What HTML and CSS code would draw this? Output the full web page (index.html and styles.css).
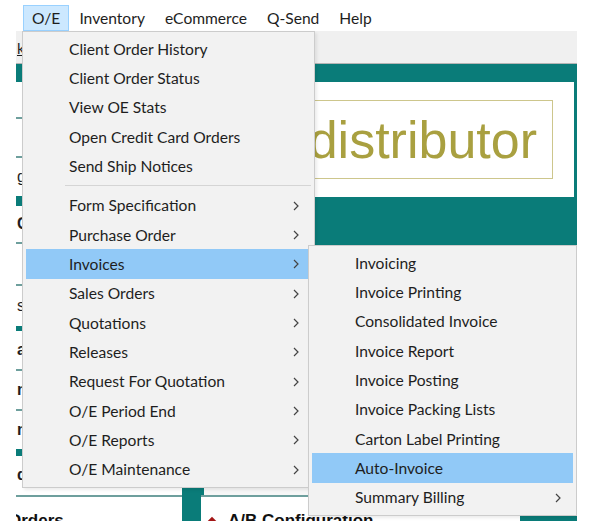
FILE: index.html
```html
<!DOCTYPE html>
<html lang="en">

<head>
    <meta charset="UTF-8">
    <meta name="viewport" content="width=device-width, initial-scale=1.0">
    <title>O/E Menu</title>
    <link rel="stylesheet" href="styles.css">
</head>

<body>
    <div class="app">
        <div class="menubar">
            <span class="mb-item active">O/E</span>
            <span class="mb-item">Inventory</span>
            <span class="mb-item">eCommerce</span>
            <span class="mb-item">Q-Send</span>
            <span class="mb-item">Help</span>
        </div>
        <div class="toolbar"><span class="tb-link">k</span></div>

        <div class="content">
            <div class="side">
                <div class="row h35"></div>
                <div class="line"></div>
                <div class="row h37"></div>
                <div class="line"></div>
                <div class="row h38">g</div>
                <div class="bar h10"></div>
                <div class="row h36 strong">C</div>
                <div class="line"></div>
                <div class="row h40"></div>
                <div class="line"></div>
                <div class="row h40">s</div>
                <div class="bar h5"></div>
                <div class="row h38 strong">a</div>
                <div class="line"></div>
                <div class="row h38 strong">n</div>
                <div class="line"></div>
                <div class="row h38 strong">n</div>
                <div class="bar h7"></div>
                <div class="row h38 strong">d</div>
            </div>
            <div class="main">
                <div class="logo-panel">
                    <div class="logo-box">distributor</div>
                </div>
                <div class="main-fill"></div>
                <div class="main-white"></div>
            </div>
        </div>

        <div class="lower">
            <div class="lower-left">Orders</div>
            <div class="lower-gap"></div>
            <div class="lower-right"><span class="diamond"></span>A/B Configuration</div>
            <div class="lower-teal"></div>
        </div>

        <!-- O/E dropdown -->
        <div class="dropdown">
            <div class="item">Client Order History</div>
            <div class="item">Client Order Status</div>
            <div class="item">View OE Stats</div>
            <div class="item">Open Credit Card Orders</div>
            <div class="item">Send Ship Notices</div>
            <div class="sep"></div>
            <div class="item sub">Form Specification<svg class="chev" viewBox="0 0 6 10"><polyline points="1,1 5,5 1,9"/></svg></div>
            <div class="item sub">Purchase Order<svg class="chev" viewBox="0 0 6 10"><polyline points="1,1 5,5 1,9"/></svg></div>
            <div class="item sub hover">Invoices<svg class="chev" viewBox="0 0 6 10"><polyline points="1,1 5,5 1,9"/></svg></div>
            <div class="item sub">Sales Orders<svg class="chev" viewBox="0 0 6 10"><polyline points="1,1 5,5 1,9"/></svg></div>
            <div class="item sub">Quotations<svg class="chev" viewBox="0 0 6 10"><polyline points="1,1 5,5 1,9"/></svg></div>
            <div class="item sub">Releases<svg class="chev" viewBox="0 0 6 10"><polyline points="1,1 5,5 1,9"/></svg></div>
            <div class="item sub">Request For Quotation<svg class="chev" viewBox="0 0 6 10"><polyline points="1,1 5,5 1,9"/></svg></div>
            <div class="item sub">O/E Period End<svg class="chev" viewBox="0 0 6 10"><polyline points="1,1 5,5 1,9"/></svg></div>
            <div class="item sub">O/E Reports<svg class="chev" viewBox="0 0 6 10"><polyline points="1,1 5,5 1,9"/></svg></div>
            <div class="item sub">O/E Maintenance<svg class="chev" viewBox="0 0 6 10"><polyline points="1,1 5,5 1,9"/></svg></div>
        </div>

        <!-- Invoices submenu -->
        <div class="dropdown submenu">
            <div class="item">Invoicing</div>
            <div class="item">Invoice Printing</div>
            <div class="item">Consolidated Invoice</div>
            <div class="item">Invoice Report</div>
            <div class="item">Invoice Posting</div>
            <div class="item">Invoice Packing Lists</div>
            <div class="item">Carton Label Printing</div>
            <div class="item hover">Auto-Invoice</div>
            <div class="item sub">Summary Billing<svg class="chev" viewBox="0 0 6 10"><polyline points="1,1 5,5 1,9"/></svg></div>
        </div>
    </div>
</body>

</html>
```

FILE: styles.css
```css
body {
    margin: 0;
    background-color: #fff;
    font-family: Lato, "Noto Sans", sans-serif;
    color: #1e1e1e;
}

.app {
    position: relative;
    width: 561px;
    height: 521px;
    margin-left: 16px;
    overflow: hidden;
}

/* menu bar */
.menubar {
    display: flex;
    align-items: flex-end;
    height: 31px;
    padding-left: 7px;
    background-color: #fff;
    font-size: 15.6px;
}

.mb-item {
    height: 26px;
    line-height: 24px;
    padding: 0 9px;
    border: 1px solid transparent;
    box-sizing: border-box;
}

.mb-item.active {
    padding: 0 8px;
    background-color: #cce8ff;
    border-color: #99d1ff;
}

.toolbar {
    height: 32px;
    background-color: #f0f0f0;
    border-bottom: 1px solid #b5b5b5;
}

.tb-link {
    display: inline-block;
    margin: 8px 0 0 1px;
    font-size: 15px;
    text-decoration: underline;
}

/* page behind the menus */
.content {
    display: flex;
    height: 431px;
    padding-top: 18px;
    box-sizing: border-box;
    background-color: #0a7c79;
}

.side {
    width: 166px;
    margin-right: 19px;
    background-color: #fff;
}

.side .row {
    display: flex;
    align-items: center;
    padding-left: 1px;
    font-family: "Liberation Sans", Arial, sans-serif;
    font-size: 16px;
}

.side .strong {
    font-weight: bold;
}

.side .line {
    height: 2px;
    background-color: #6e9f9d;
}

.side .bar {
    background-color: #0a7c79;
}

.h5 { height: 5px; }
.h7 { height: 7px; }
.h10 { height: 10px; }
.h35 { height: 35px; }
.h36 { height: 36px; }
.h37 { height: 37px; }
.h38 { height: 38px; }
.h40 { height: 40px; }

.main {
    flex: 1;
    display: flex;
    flex-direction: column;
    padding: 0 3px;
}

.logo-panel {
    display: flex;
    justify-content: flex-end;
    align-items: center;
    height: 115px;
    padding-right: 21px;
    background-color: #fff;
}

.logo-box {
    height: 79px;
    box-sizing: border-box;
    padding: 2px 15px 0 60px;
    border: 1px solid #cdc68c;
    font-family: "Liberation Sans", Arial, sans-serif;
    font-size: 52px;
    line-height: 75px;
    color: #a9a040;
}

.main-fill {
    flex: 1;
}

.main-white {
    height: 30px;
    background-color: #f6f6f6;
}

.lower {
    display: flex;
    height: 26px;
    font-family: "Liberation Sans", Arial, sans-serif;
    font-size: 17px;
    font-weight: bold;
    color: #111;
}

.lower-left,
.lower-right {
    border-top: 2px solid #6e9f9d;
    background-color: #fff;
    padding-top: 14px;
    line-height: 20px;
    white-space: nowrap;
}

.lower-left {
    width: 166px;
    text-indent: -8px;
}

.lower-gap {
    width: 19px;
    background-color: #0a7c79;
}

.lower-right {
    width: 319px;
    padding-left: 8px;
    box-sizing: border-box;
}

.diamond {
    display: inline-block;
    width: 6px;
    height: 6px;
    margin: 0 13px 2px 0;
    background-color: #a31515;
    transform: rotate(45deg);
}

.lower-teal {
    flex: 1;
    background-color: #0a7c79;
}

/* dropdown menus */
.dropdown {
    position: absolute;
    left: 6px;
    top: 31px;
    width: 293px;
    padding: 2px 3px 3px;
    box-sizing: border-box;
    border: 1px solid #cccccc;
    background-color: #f2f2f2;
    font-size: 15.6px;
    box-shadow: 2px 2px 3px rgba(0, 0, 0, .08);
}

.submenu {
    left: 292px;
    top: 245px;
    width: 269px;
}

.item {
    position: relative;
    display: flex;
    align-items: center;
    height: 29.33px;
    padding-left: 43px;
    white-space: nowrap;
}

.item.hover {
    background-color: #91c9f7;
}

.chev {
    position: absolute;
    right: 12px;
    top: 10px;
    width: 6px;
    height: 10px;
    fill: none;
    stroke: #444;
    stroke-width: 1.2;
}

.sep {
    height: 1px;
    margin: 4px 0 5px 39px;
    background-color: #d5d5d5;
}
```
